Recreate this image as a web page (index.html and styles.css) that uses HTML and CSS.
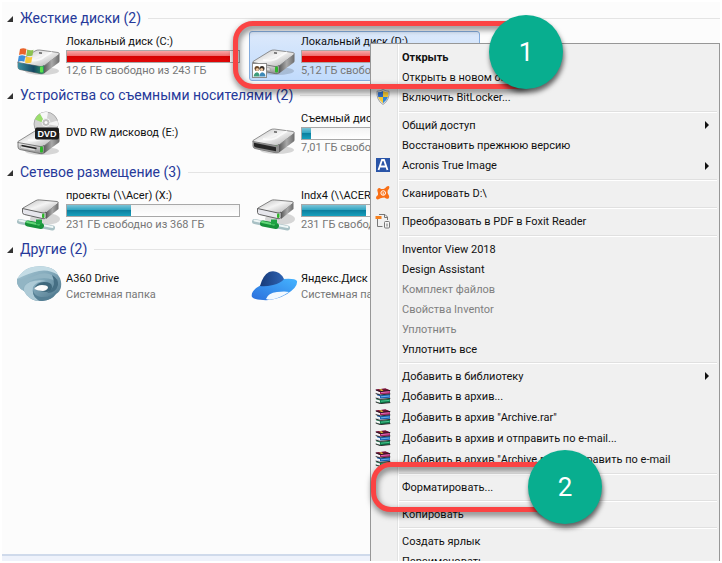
FILE: index.html
```html
<!DOCTYPE html>
<html lang="ru">
<head>
    <meta charset="UTF-8">
    <meta name="viewport" content="width=device-width, initial-scale=1.0">
    <title>Компьютер</title>
    <link rel="stylesheet" href="styles.css">
</head>
<body>
    <!-- shared icons -->
    <svg class="sprite" width="0" height="0" aria-hidden="true">
        <defs>
            <linearGradient id="metal-top" x1="0" y1="0" x2="1" y2="1">
                <stop offset="0" stop-color="#b9b9b9"/>
                <stop offset=".45" stop-color="#f4f4f4"/>
                <stop offset="1" stop-color="#a6a6a6"/>
            </linearGradient>
            <linearGradient id="metal-side" x1="0" y1="0" x2="1" y2="0">
                <stop offset="0" stop-color="#5a5a5a"/>
                <stop offset=".5" stop-color="#a9a9a9"/>
                <stop offset="1" stop-color="#6c6c6c"/>
            </linearGradient>
            <linearGradient id="metal-front" x1="0" y1="0" x2="0" y2="1">
                <stop offset="0" stop-color="#f0f0f0"/>
                <stop offset="1" stop-color="#8e8e8e"/>
            </linearGradient>
            <linearGradient id="teal" x1="0" y1="0" x2="1" y2="0">
                <stop offset="0" stop-color="#3d8fa0"/>
                <stop offset=".6" stop-color="#164863"/>
                <stop offset="1" stop-color="#2f9a62"/>
            </linearGradient>
            <linearGradient id="a360" x1="0" y1="0" x2="1" y2="1">
                <stop offset="0" stop-color="#a9c8d4"/>
                <stop offset=".5" stop-color="#7fa6b8"/>
                <stop offset="1" stop-color="#4a7287"/>
            </linearGradient>
            <linearGradient id="ya-brim" x1="0" y1="1" x2="1" y2="0">
                <stop offset="0" stop-color="#2b6fdc"/>
                <stop offset="1" stop-color="#45b4ff"/>
            </linearGradient>
            <linearGradient id="ya-top" x1="0" y1="0" x2="1" y2="0">
                <stop offset="0" stop-color="#173a78"/>
                <stop offset="1" stop-color="#2f64b4"/>
            </linearGradient>
        </defs>
        <symbol id="drive" viewBox="0 0 48 48">
            <ellipse cx="27" cy="39" rx="17" ry="4" fill="#000" opacity=".15"/>
            <path d="M3 29.500 20 19q2-1.200 4.500-1L43 20.500q2 .6 1 2L29 34q-2 1.300-4 1L4 31.500q-2-.5-1-2z" fill="url(#metal-top)" stroke="#777" stroke-width=".8"/>
            <path d="M29 34 44.500 22V29q0 1-1 1.800L29 41.500z" fill="url(#metal-side)"/>
            <path d="M3 30.500l22 4q2.500.3 4-1v7.500q-1.500 1-4 .6L5 37.500Q3 37 3 35z" fill="url(#metal-front)" stroke="#666" stroke-width=".8"/>
            <path d="M5.500 33.300 20 36v3L6.500 36.500q-1-.3-1-1.200z" fill="#dcdcdc" stroke="#888" stroke-width=".4"/>
            <path d="M24 20.800l3 .4" stroke="#444" stroke-width="1.200"/>
            <path d="M13 28q10 2 16-3l8-5" fill="none" stroke="#fff" stroke-width="2" opacity=".7"/>
            <rect x="25" y="34.500" width="3" height="6" rx="1" fill="#2fb52a"/>
        </symbol>
        <symbol id="drive-net" viewBox="0 0 48 48">
            <ellipse cx="30" cy="33" rx="15" ry="6" fill="#000" opacity=".15"/>
            <path d="M8 22 21 14.500q1.500-.8 3.500-.6L42 15.500q2 .5 1 1.800L31 27q-1.500 1-3.500.6L8.500 23.500q-1.200-.6-.5-1.500z" fill="url(#metal-top)" stroke="#666" stroke-width=".8"/>
            <path d="M31 26.500 43.500 17v6L31 33z" fill="url(#metal-side)"/>
            <path d="M7.500 22.500 28 27q1.800.3 3-1v5.500q-1 1.500-3 1.200L9.500 28.500q-2-.5-2-2z" fill="#e6e6ec" stroke="#555" stroke-width=".9"/>
            <rect x="27" y="27.500" width="2.500" height="4.500" rx="1" fill="#2fb52a"/>
            <path d="m4.500 35.500 33 6.500" stroke="#a8c0c4" stroke-width="5" stroke-linecap="round"/>
            <path d="m4.500 34.500 33 6.500" stroke="#eef6f6" stroke-width="2" stroke-linecap="round"/>
            <path d="m13 37.500 13 2.500" stroke="#17913a" stroke-width="6" stroke-linecap="round"/>
            <path d="m12 36 12 2.500" stroke="#63d779" stroke-width="2" stroke-linecap="round"/>
            <path d="M21 33.500h6v5h-6z" fill="#1fa344"/>
        </symbol>
        <symbol id="rar" viewBox="0 0 16 16">
            <path d="M1 1.500 10.500.5 15 2.500v3.200L5.500 6 1 4.500z" fill="#a4175f"/>
            <path d="M1 1.500 10.500.5 15 2.300 5 3.500z" fill="#6d1233"/>
            <path d="M2 6 5.500 7.200 15 6v3.700L5.500 10.600 2 9z" fill="#1c62b5"/>
            <path d="M1 10.500l4.500 1.300 9.500-1v3.700L5.500 15.600 1 13.600z" fill="#0f7d4c"/>
            <path d="M1 2.500 5 4v2L1 4.800zM1 7l4 1.300v1.900L1 9zM1 11.300l4 1.300v2.200L1 13.500z" fill="#f7f7f7"/>
            <path d="M.7 1.900 5.200 3.600 15.300 2.400M.7 5.500 5.200 6.900l10.100-1M.7 10l4.500 1.400 10.100-1M.7 14l4.500 1.600 10.100-1" fill="none" stroke="#1c1c1c" stroke-width=".9"/>
            <path d="m6 4.600 8.500-.8" stroke="#e87fc0" stroke-width=".9"/>
            <path d="m6 8.800 8.500-.8" stroke="#6fc0ee" stroke-width=".9"/>
            <path d="m6 13.200 8.500-.8" stroke="#4fd09a" stroke-width=".9"/>
            <path d="M4 1.500 6.500 1.200l2 1.300-2 .6z" fill="#e8c533"/>
        </symbol>
    </svg>

    <div class="screen">
        <main class="explorer">
            <section class="group">
                <h2 class="group-title"><button class="group-toggle" type="button"><span class="toggle-mark"></span>Жесткие диски (2)</button></h2>
                <div class="tiles">
                    <div class="tile">
                        <svg class="tile-icon" viewBox="0 0 48 48" aria-hidden="true">
                            <use href="#drive"/>
                            <path d="M3 30.500l22 4q2.500.3 4-1v7.500q-1.500 1-4 .6L5 37.500Q3 37 3 35z" fill="url(#teal)"/>
                            <rect x="25" y="34.500" width="3" height="6" rx="1" fill="#5be34c"/>
                            <path d="M5 17q3.200-1.500 6.500 0l-1 6q-3.200-1.500-6.500 0z" fill="#e9632a"/>
                            <path d="M12.200 17.500q3 1.300 6.300.2l-1 5.800q-3 1.200-6.300 0z" fill="#8cc152"/>
                            <path d="M3.800 24q3.200-1.500 6.500 0l-1 5.800q-3.200-1.500-6.500 0z" fill="#3d8fdc"/>
                            <path d="M11 24.500q3 1.300 6.300.2l-1 5.800q-3 1.200-6.300 0z" fill="#f8c83a"/>
                        </svg>
                        <div class="tile-text">
                            <div class="tile-name">Локальный диск (C:)</div>
                            <div class="capacity"><div class="used full" style="width: 95%"></div></div>
                            <div class="tile-info">12,6 ГБ свободно из 243 ГБ</div>
                        </div>
                    </div>
                    <div class="tile selected">
                        <svg class="tile-icon" viewBox="0 0 48 48" aria-hidden="true">
                            <use href="#drive"/>
                            <rect x="2.500" y="31.500" width="14" height="14" fill="#fff" stroke="#8b8b8b"/>
                            <circle cx="7" cy="36.500" r="2.500" fill="#6a4a2c"/>
                            <circle cx="12" cy="36.500" r="2.500" fill="#3b332c"/>
                            <circle cx="7.300" cy="37.500" r="1.500" fill="#f0c9a2"/>
                            <circle cx="11.700" cy="37.500" r="1.500" fill="#f0c9a2"/>
                            <path d="M3.500 44.500q.5-4 3.500-4.300 2.500.3 2.500 4.300z" fill="#3f9d7c"/>
                            <path d="M9.500 44.500q.2-4 2.700-4.300 3 .3 3.300 4.300z" fill="#3c89b8"/>
                        </svg>
                        <div class="tile-text">
                            <div class="tile-name">Локальный диск (D:)</div>
                            <div class="capacity"><div class="used full" style="width: 96%"></div></div>
                            <div class="tile-info">5,12 ГБ свободно из 222 ГБ</div>
                        </div>
                    </div>
                </div>
            </section>

            <section class="group">
                <h2 class="group-title"><button class="group-toggle" type="button"><span class="toggle-mark"></span>Устройства со съемными носителями (2)</button></h2>
                <div class="tiles">
                    <div class="tile">
                        <svg class="tile-icon" viewBox="0 0 48 48" aria-hidden="true">
                            <use href="#drive" y="3"/>
                            <circle cx="31" cy="15" r="12" fill="#d2d2d2" stroke="#9a9a9a" stroke-width=".8"/>
                            <path d="M31 15 20 10.500A12 12 0 0 1 25 4.600z" fill="#9ade6c"/>
                            <path d="M31 15 25 4.600A12 12 0 0 1 33 3.200z" fill="#f7f7f7"/>
                            <path d="M31 15 42.500 11.500A12 12 0 0 1 43 17z" fill="#f5f5f5"/>
                            <circle cx="31" cy="13.500" r="4" fill="#bfbfbf" stroke="#f4f4f4"/>
                            <circle cx="31" cy="13.500" r="1.500" fill="#fff"/>
                            <path d="m6.500 36.500 15 3" stroke="#222" stroke-width="1.600"/>
                            <rect x="20" y="18.500" width="24" height="12" rx="2" fill="#1d1d1d"/>
                            <text class="dvd-label" x="32" y="28" text-anchor="middle">DVD</text>
                        </svg>
                        <div class="tile-text">
                            <div class="tile-name">DVD RW дисковод (E:)</div>
                        </div>
                    </div>
                    <div class="tile">
                        <svg class="tile-icon" viewBox="0 0 48 48" aria-hidden="true">
                            <use href="#drive" y="2"/>
                            <path d="M3 32.500l22 4q2.500.3 4-1v7.500q-1.500 1-4 .6L5 39.500Q3 39 3 37z" fill="#8d8d8d"/>
                            <path d="M4 33.800 26 38.200v4L6.500 38.600q-2.500-.5-2.500-2z" fill="#262626"/>
                        </svg>
                        <div class="tile-text">
                            <div class="tile-name">Съемный диск (F:)</div>
                            <div class="capacity"><div class="used" style="width: 5%"></div></div>
                            <div class="tile-info">7,01 ГБ свободно из 7,4 ГБ</div>
                        </div>
                    </div>
                </div>
            </section>

            <section class="group">
                <h2 class="group-title"><button class="group-toggle" type="button"><span class="toggle-mark"></span>Сетевое размещение (3)</button></h2>
                <div class="tiles">
                    <div class="tile">
                        <svg class="tile-icon" viewBox="0 0 48 48" aria-hidden="true"><use href="#drive-net"/></svg>
                        <div class="tile-text">
                            <div class="tile-name">проекты (\\Acer) (X:)</div>
                            <div class="capacity"><div class="used" style="width: 37%"></div></div>
                            <div class="tile-info">231 ГБ свободно из 368 ГБ</div>
                        </div>
                    </div>
                    <div class="tile">
                        <svg class="tile-icon" viewBox="0 0 48 48" aria-hidden="true"><use href="#drive-net"/></svg>
                        <div class="tile-text">
                            <div class="tile-name">Indx4 (\\ACER) (Y:)</div>
                            <div class="capacity"><div class="used" style="width: 37%"></div></div>
                            <div class="tile-info">231 ГБ свободно из 368 ГБ</div>
                        </div>
                    </div>
                </div>
            </section>

            <section class="group">
                <h2 class="group-title"><button class="group-toggle" type="button"><span class="toggle-mark"></span>Другие (2)</button></h2>
                <div class="tiles">
                    <div class="tile">
                        <svg class="tile-icon" viewBox="0 0 48 48" aria-hidden="true">
                            <path d="M2 16Q7 8 14 5q9-3 18-1 9 2 11 8 4 5 3 12-1 5-5 7-4 6-14 7-12 1-18-10-8-4-7-12z" fill="url(#a360)"/>
                            <path d="M14 5q9-3 18-1 9 2 11 8-9-6-19-4-10 2-22 8 5-8 12-11z" fill="#c4dce5"/>
                            <path d="M2 16q9 1 17-3 10-5 18-1 6 3 6 9-5-6-14-6-12 0-18 6-4 3-2 7-8-4-7-12z" fill="#92b5c4"/>
                            <path d="M9 28q-1-6 6-9 8-3 16-1-10 0-13 6-2 7 6 14-11-1-15-10z" fill="#adcad6"/>
                            <path d="M18 27q1 6 8 7 10 1 17-7-4 10-16 11-10-2-9-11z" fill="#557f94"/>
                            <path d="M37 12q7 4 6 10-2 8-11 8 6-4 7-9 0-5-2-9z" fill="#456e83"/>
                            <path d="M19 26q3-7 10-7 8 0 8 5 0 5-7 5-6-1-11-3z" fill="#3f687c"/>
                            <path d="M19 26q3-4 8-4 5 0 6 2 0 3-5 4-5 0-9-2z" fill="#fcfcfc"/>
                        </svg>
                        <div class="tile-text">
                            <div class="tile-name">A360 Drive</div>
                            <div class="tile-info">Системная папка</div>
                        </div>
                    </div>
                    <div class="tile">
                        <svg class="tile-icon" viewBox="0 0 48 48" aria-hidden="true">
                            <path d="M2 34q-2-6 9-12 10-5 22-6 12-1 14 2 1 6-10 13-12 7-24 6-9 0-11-3z" fill="url(#ya-brim)"/>
                            <path d="M10 23q3-11 9-14 5-2 10 1 3 2 5 6-3 4-11 6-8 2-13 1z" fill="url(#ya-top)"/>
                            <path d="M16 36q2-6 11-7 8-1 12 0-9 6-17 7.500-4 .5-6-.5z" fill="#f3f9ff"/>
                        </svg>
                        <div class="tile-text">
                            <div class="tile-name">Яндекс.Диск</div>
                            <div class="tile-info">Системная папка</div>
                        </div>
                    </div>
                </div>
            </section>

            <footer class="details-pane"></footer>
        </main>

        <ul class="context-menu">
            <li><button class="item default" type="button">Открыть</button></li>
            <li><button class="item" type="button">Открыть в новом окне</button></li>
            <li><button class="item with-icon" type="button">
                <svg class="item-icon" viewBox="0 0 16 16" aria-hidden="true">
                    <path d="M8 .5q3 1.800 6 1.700.8 9-6 13.300Q1.200 11.200 2 2.200 5 2.300 8 .5z" fill="#e8e8e8" stroke="#8a8f96" stroke-width=".8"/>
                    <path d="M8 2v6H3.200Q2.700 5.500 3 3.300 5.600 3.300 8 2z" fill="#2f6fca"/>
                    <path d="M8 2v6h4.800q.5-2.500.2-4.700Q10.400 3.300 8 2z" fill="#f5c932"/>
                    <path d="M8 8v6.200Q4.200 11.700 3.200 8z" fill="#f5c932"/>
                    <path d="M8 8v6.200q3.800-2.500 4.800-6.200z" fill="#2f86d6"/>
                </svg>Включить BitLocker...</button></li>
            <li class="separator"></li>
            <li><button class="item submenu" type="button">Общий доступ</button></li>
            <li><button class="item" type="button">Восстановить прежнюю версию</button></li>
            <li><button class="item with-icon submenu" type="button">
                <svg class="item-icon" viewBox="0 0 16 16" aria-hidden="true">
                    <rect x="1" y="1" width="14" height="14" fill="#2a55a8"/>
                    <path d="M3.500 13 7 3h2l3.500 10M5.500 9.500h5" fill="none" stroke="#fff" stroke-width="1.800"/>
                </svg>Acronis True Image</button></li>
            <li class="separator"></li>
            <li><button class="item with-icon" type="button">
                <svg class="item-icon" viewBox="0 0 16 16" aria-hidden="true">
                    <path d="M3 3.500Q4.500 2.500 6 4q2 .3 4-.8Q12.500.3 14 1.200q1.200 1.500-1.300 4.300-.5 2 .3 3.500 2 2.700.7 4.200-1.500 1.500-4.200-.7-2 0-4 .8-2.700 2-4.200.5-1-2 1.700-3.800.3-1.700-.3-3Q1.700 4.700 3 3.500z" fill="#f96f16"/>
                    <circle cx="8.200" cy="8" r="2.300" fill="none" stroke="#fff"/>
                    <path d="M8.200 7.300v2.500" stroke="#fff"/>
                </svg>Сканировать D:\</button></li>
            <li class="separator"></li>
            <li><button class="item with-icon" type="button">
                <svg class="item-icon" viewBox="0 0 16 16" aria-hidden="true">
                    <path d="M2.500 5.500v8h5M4 1.500h6l2.500 2.500v3M9.500 1.500V4.500h3" fill="none" stroke="#777" stroke-width="1"/>
                    <path d="M.5 3h6v3h-6z" fill="#f4801f"/>
                    <rect x="9.500" y="8.500" width="5" height="6.500" rx="1" fill="#f5f5f5" stroke="#777"/>
                    <path d="M12 10.500v3" stroke="#777"/>
                </svg>Преобразовать в PDF в Foxit Reader</button></li>
            <li class="separator"></li>
            <li><button class="item" type="button">Inventor View 2018</button></li>
            <li><button class="item" type="button">Design Assistant</button></li>
            <li><button class="item" type="button" disabled>Комплект файлов</button></li>
            <li><button class="item" type="button" disabled>Свойства Inventor</button></li>
            <li><button class="item" type="button" disabled>Уплотнить</button></li>
            <li><button class="item" type="button">Уплотнить все</button></li>
            <li class="separator"></li>
            <li><button class="item submenu" type="button">Добавить в библиотеку</button></li>
            <li><button class="item with-icon" type="button"><svg class="item-icon" aria-hidden="true"><use href="#rar"/></svg>Добавить в архив...</button></li>
            <li><button class="item with-icon" type="button"><svg class="item-icon" aria-hidden="true"><use href="#rar"/></svg>Добавить в архив "Archive.rar"</button></li>
            <li><button class="item with-icon" type="button"><svg class="item-icon" aria-hidden="true"><use href="#rar"/></svg>Добавить в архив и отправить по e-mail...</button></li>
            <li><button class="item with-icon" type="button"><svg class="item-icon" aria-hidden="true"><use href="#rar"/></svg>Добавить в архив "Archive.rar" и отправить по e-mail</button></li>
            <li class="separator"></li>
            <li><button class="item" type="button">Форматировать...</button></li>
            <li class="separator"></li>
            <li><button class="item" type="button">Копировать</button></li>
            <li class="separator"></li>
            <li><button class="item" type="button">Создать ярлык</button></li>
            <li><button class="item" type="button">Переименовать</button></li>
        </ul>

        <!-- step marks -->
        <div class="frame frame-disk"></div>
        <div class="step step-disk">1</div>
        <div class="frame frame-format"></div>
        <div class="step step-format">2</div>
    </div>
</body>
</html>
```
FILE: styles.css
```css
* {
    box-sizing: border-box;
}
body {
    margin: 0;
    padding: 2px;
    background: #fff;
    font-family: Roboto, "Noto Sans", sans-serif;
    font-size: 11px;
    color: #111;
}
button {
    font: inherit;
    color: inherit;
    background: none;
    border: none;
    padding: 0;
    text-align: left;
}
.sprite {
    position: absolute;
}
.screen {
    position: relative;
    height: calc(100vh - 4px);
    overflow: hidden;
}

/* explorer */
.explorer {
    display: flex;
    flex-direction: column;
    min-height: 100%;
    padding-top: 4px;
    background: #fcfcfc;
}
.group {
    margin-bottom: 2px;
}
.group-title {
    display: flex;
    align-items: center;
    gap: 7px;
    margin: 0;
    padding-left: 5px;
    font-size: 14px;
    font-weight: normal;
    line-height: 25px;
    color: #26399a;
}
.group-title::after {
    content: "";
    flex: 1;
    height: 1px;
    background: #e4e4e4;
}
.group-toggle {
    display: flex;
    align-items: center;
    gap: 7px;
    white-space: nowrap;
}
.toggle-mark {
    border-left: 6px solid transparent;
    border-bottom: 6px solid #333;
}
.tiles {
    display: flex;
    gap: 4px;
    padding-left: 12px;
}
.tile {
    display: flex;
    align-items: center;
    gap: 3px;
    flex: none;
    width: 231px;
    padding-right: 4px;
    border: 1px solid transparent;
    border-radius: 3px;
}
.tile.selected {
    border-color: #84acdd;
    background: linear-gradient(#dce9fb, #c1dbfc);
}
.tile-icon {
    flex: none;
    width: 48px;
    height: 48px;
}
.tile-text {
    flex: 1;
    line-height: 16px;
    white-space: nowrap;
}
.tile-info {
    color: #777;
}
.capacity {
    height: 13px;
    border: 1px solid #a8a8a8;
    background: linear-gradient(#f3f3f3, #fff);
}
.used {
    height: 100%;
    background: linear-gradient(#7cc3d6, #2fa5c2 45%, #0c7f9f 50%, #17a0bd);
}
.used.full {
    background: linear-gradient(#f9a5a5, #f06a6a 45%, #d60000 50%, #e00808);
}
.dvd-label {
    font-family: "Liberation Sans", sans-serif;
    font-size: 9px;
    font-weight: bold;
    fill: #fff;
}
.details-pane {
    height: 7px;
    margin-top: auto;
    border-top: 2px solid #cfdaeb;
    background: #eef2fb;
}

/* context menu */
.context-menu {
    position: absolute;
    top: 41px;
    left: 368px;
    right: 0;
    margin: 0;
    padding: 3px 2px;
    list-style: none;
    border: 1px solid #979797;
    background: linear-gradient(90deg, transparent 26px, #e2e3e3 26px, #e2e3e3 27px, #fff 27px, #fff 28px, transparent 28px) #f0f0f0;
}
.item {
    display: flex;
    align-items: center;
    position: relative;
    width: 100%;
    height: 20px;
    padding-left: 29px;
    white-space: nowrap;
}
.item.with-icon {
    height: 21px;
}
.item.default {
    font-weight: bold;
}
.item:disabled {
    color: #808080;
}
.item-icon {
    position: absolute;
    top: 2px;
    left: 2px;
    width: 16px;
    height: 16px;
}
.submenu::after {
    content: "";
    margin-left: auto;
    margin-right: 8px;
    border: 4px solid transparent;
    border-left-color: #111;
    border-right: none;
}
.separator {
    height: 2px;
    margin: 3px 0 2px 26px;
    border-top: 1px solid #e0e0e0;
    border-bottom: 1px solid #fff;
}

/* step marks */
.frame {
    position: absolute;
    border: 5px solid #fb4343;
    border-radius: 20px;
    filter: drop-shadow(1px 3px 3px rgba(0,0,0,0.6));
}
.frame-disk {
    top: 19px;
    left: 231px;
    width: 300px;
    height: 68px;
}
.frame-format {
    top: 460px;
    left: 369px;
    width: 200px;
    height: 50px;
}
.step {
    position: absolute;
    width: 74px;
    height: 74px;
    border-radius: 50%;
    background: #08ae8f;
    box-shadow: 1px 4px 5px rgba(0,0,0,0.6);
    color: #fff;
    font-size: 26px;
    line-height: 74px;
    text-align: center;
}
.step-disk {
    top: 13px;
    left: 487px;
}
.step-format {
    top: 448px;
    left: 526px;
}
```
